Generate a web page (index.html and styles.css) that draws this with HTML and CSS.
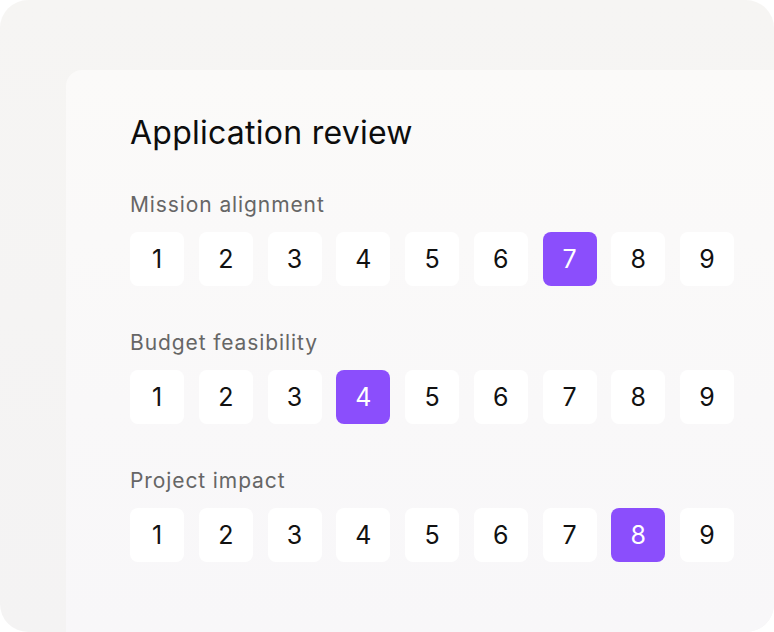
FILE: index.html
```html
<!DOCTYPE html>
<html lang="en">
<head>
<meta charset="utf-8">
<title>Application review</title>
<link rel="stylesheet" href="styles.css">
</head>
<body>
<div class="frame">
  <div class="card">
    <h1 class="title">Application review</h1>
    <section class="criterion">
      <div class="label">Mission alignment</div>
      <div class="scale">
        <span class="opt">1</span><span class="opt">2</span><span class="opt">3</span><span class="opt">4</span><span class="opt">5</span><span class="opt">6</span><span class="opt selected">7</span><span class="opt">8</span><span class="opt">9</span>
      </div>
    </section>
    <section class="criterion">
      <div class="label">Budget feasibility</div>
      <div class="scale">
        <span class="opt">1</span><span class="opt">2</span><span class="opt">3</span><span class="opt selected">4</span><span class="opt">5</span><span class="opt">6</span><span class="opt">7</span><span class="opt">8</span><span class="opt">9</span>
      </div>
    </section>
    <section class="criterion">
      <div class="label">Project impact</div>
      <div class="scale">
        <span class="opt">1</span><span class="opt">2</span><span class="opt">3</span><span class="opt">4</span><span class="opt">5</span><span class="opt">6</span><span class="opt">7</span><span class="opt selected">8</span><span class="opt">9</span>
      </div>
    </section>
  </div>
</div>
</body>
</html>
```
FILE: styles.css
```css
html, body {
  margin: 0;
  padding: 0;
  background: #ffffff;
}
body {
  font-family: Inter, "Noto Sans", "Liberation Sans", sans-serif;
}
.frame {
  width: 774px;
  height: 632px;
  box-sizing: border-box;
  border-radius: 28px;
  overflow: hidden;
  background: linear-gradient(180deg, #f6f5f3 0%, #f4f3f3 100%);
  padding: 70px 0 0 66px;
}
.card {
  height: 100%;
  box-sizing: border-box;
  border-radius: 16px 0 0 0;
  background: linear-gradient(180deg, #fbfaf9 0%, #f9f8f9 60%, #f8f7f9 100%);
  padding: 45px 0 0 64px;
}
.title {
  margin: 0;
  font-size: 32px;
  line-height: 36px;
  font-weight: 400;
  color: #0d0d0d;
  letter-spacing: 0.25px;
}
.criterion {
  margin-top: 42px;
}
.criterion + .criterion {
  margin-top: 45px;
}
.label {
  font-size: 21px;
  line-height: 24px;
  color: #666666;
  letter-spacing: 0.9px;
}
.scale {
  margin-top: 15px;
  display: grid;
  grid-template-columns: repeat(9, 54px);
  column-gap: 14.75px;
}
.opt {
  height: 54px;
  border-radius: 8px;
  background: #ffffff;
  display: flex;
  align-items: center;
  justify-content: center;
  font-size: 25px;
  color: #111111;
}
.opt.selected {
  background: #8b4efc;
  color: #ffffff;
}
```
